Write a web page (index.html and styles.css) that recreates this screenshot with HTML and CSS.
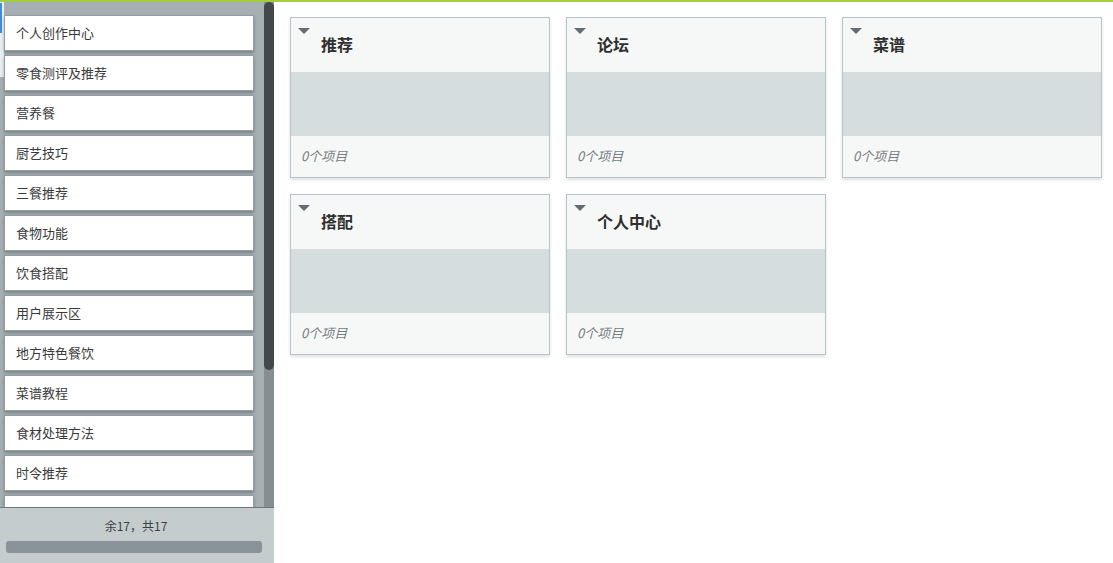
FILE: index.html
```html
<!DOCTYPE html>
<html lang="zh">
<head>
<meta charset="utf-8">
<link rel="stylesheet" href="styles.css">
</head>
<body>
<div class="topline"></div>
<div class="app">
  <aside class="sidebar">
    <div class="list-area">
      <div class="focus-mark"></div>
      <div class="items">
        <div class="item">个人创作中心</div>
        <div class="item">零食测评及推荐</div>
        <div class="item">营养餐</div>
        <div class="item">厨艺技巧</div>
        <div class="item">三餐推荐</div>
        <div class="item">食物功能</div>
        <div class="item">饮食搭配</div>
        <div class="item">用户展示区</div>
        <div class="item">地方特色餐饮</div>
        <div class="item">菜谱教程</div>
        <div class="item">食材处理方法</div>
        <div class="item">时令推荐</div>
        <div class="item"></div>
      </div>
      <div class="track"><div class="thumb"></div></div>
    </div>
    <div class="sidebar-footer">
      <div class="count">余17，共17</div>
      <div class="progress"></div>
    </div>
  </aside>
  <main class="board">
    <div class="card">
      <div class="card-head"><span class="caret"></span><span class="card-title">推荐</span></div>
      <div class="card-body"></div>
      <div class="card-foot">0个项目</div>
    </div>
    <div class="card">
      <div class="card-head"><span class="caret"></span><span class="card-title">论坛</span></div>
      <div class="card-body"></div>
      <div class="card-foot">0个项目</div>
    </div>
    <div class="card">
      <div class="card-head"><span class="caret"></span><span class="card-title">菜谱</span></div>
      <div class="card-body"></div>
      <div class="card-foot">0个项目</div>
    </div>
    <div class="card">
      <div class="card-head"><span class="caret"></span><span class="card-title">搭配</span></div>
      <div class="card-body"></div>
      <div class="card-foot">0个项目</div>
    </div>
    <div class="card">
      <div class="card-head"><span class="caret"></span><span class="card-title">个人中心</span></div>
      <div class="card-body"></div>
      <div class="card-foot">0个项目</div>
    </div>
  </main>
</div>
</body>
</html>
```
FILE: styles.css
```css
* { box-sizing: border-box; }
html, body {
  margin: 0;
  padding: 0;
  height: 100%;
  overflow: hidden;
  background: #ffffff;
  font-family: "Noto Sans CJK SC", "Noto Sans", sans-serif;
  color: #333;
}
.topline {
  height: 2px;
  background: #a3cf3c;
}
.app {
  display: flex;
  height: 561px;
}
.sidebar {
  width: 274px;
  flex: none;
  display: flex;
  flex-direction: column;
  background: #a6afb2;
}
.list-area {
  position: relative;
  flex: 1;
  display: flex;
  overflow: hidden;
}
.focus-mark {
  position: absolute;
  left: 0;
  top: 0;
  width: 4px;
  height: 75px;
  background: #e9eeef;
}
.focus-mark::before {
  content: "";
  position: absolute;
  left: 0;
  top: 1px;
  width: 2px;
  height: 30px;
  background: #3d8fd8;
}
.items {
  width: 264px;
  padding: 13px 10px 0 4px;
  display: flex;
  flex-direction: column;
  gap: 4px;
}
.item {
  flex: none;
  height: 36px;
  background: #fff;
  border: 1px solid #949ea2;
  box-shadow: 0 2px 3px rgba(40, 50, 55, 0.35);
  padding-left: 11px;
  font-size: 13px;
  line-height: 34px;
  color: #3a3a3a;
  white-space: nowrap;
  position: relative;
}
.track {
  width: 10px;
  flex: none;
  background: #868e91;
}
.thumb {
  height: 368px;
  border-radius: 5px;
  background: #43484b;
}
.sidebar-footer {
  height: 56px;
  flex: none;
  background: #c5cccd;
  border-top: 1px solid #6f797d;
  padding: 9px 12px 0 6px;
  display: flex;
  flex-direction: column;
  align-items: stretch;
}
.count {
  text-align: center;
  font-size: 12px;
  line-height: 17px;
  color: #3a3f42;
  padding-left: 4px;
}
.progress {
  margin-top: 7px;
  height: 12px;
  border-radius: 3px;
  background: #8a9498;
}
.board {
  flex: 1;
  padding: 15px 16px 0 16px;
  display: grid;
  grid-template-columns: repeat(3, 260px);
  grid-auto-rows: 161px;
  column-gap: 16px;
  row-gap: 16px;
  align-content: start;
}
.card {
  border: 1px solid #b8c5c8;
  background: #f6f8f8;
  box-shadow: 0 2px 3px rgba(0, 0, 0, 0.12);
  display: flex;
  flex-direction: column;
}
.card-head {
  height: 54px;
  position: relative;
  padding: 13px 0 0 30px;
}
.caret {
  position: absolute;
  left: 7px;
  top: 10px;
  width: 0;
  height: 0;
  border-left: 6px solid transparent;
  border-right: 6px solid transparent;
  border-top: 6px solid #646c71;
}
.card-title {
  font-size: 16px;
  font-weight: bold;
  line-height: 27px;
  color: #2f2f2f;
}
.card-body {
  height: 64px;
  background: #d5dddf;
}
.card-foot {
  flex: 1;
  padding-left: 10px;
  font-size: 13px;
  font-style: italic;
  line-height: 40px;
  color: #777d80;
}
```
